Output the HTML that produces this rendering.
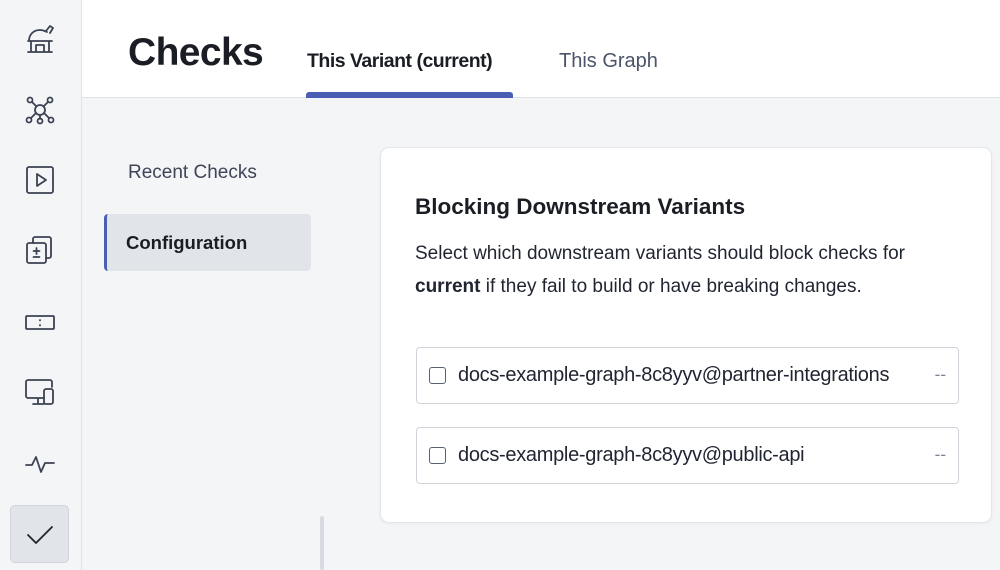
<!DOCTYPE html>
<html><head><meta charset="utf-8"><style>
*{box-sizing:border-box;margin:0;padding:0}
body{width:1000px;height:570px;overflow:hidden;background:#f4f5f7;font-family:"Liberation Sans",sans-serif;color:#1f2430;position:relative}
.side{position:absolute;left:0;top:0;width:82px;height:570px;background:#f4f5f7;border-right:1px solid #dfe2e7}
.ic{position:absolute;left:22px;width:36px;height:36px}
.ic svg{width:36px;height:36px;fill:none;stroke:#3b4252;stroke-width:1.8;stroke-linecap:round;stroke-linejoin:round}
.act{position:absolute;left:10px;top:505px;width:59px;height:58px;background:#e1e4e9;border:1px solid #cfd3da;border-radius:5px}
.hdr{position:absolute;left:82px;top:0;width:918px;height:98px;background:#fff;border-bottom:1px solid #dfe2e7}
h1{position:absolute;left:128px;top:31px;font-size:39px;font-weight:bold;color:#1a1d24;letter-spacing:-0.6px}
.t1{position:absolute;left:307px;top:50px;font-size:19.5px;font-weight:bold;color:#1a1d24;letter-spacing:-0.5px}
.ul{position:absolute;left:306px;top:92px;width:207px;height:6px;background:#4a5fb4;border-radius:3px 3px 0 0}
.t2{position:absolute;left:559px;top:50px;font-size:20px;color:#4b5468}
.rc{position:absolute;left:128px;top:162px;font-size:19px;color:#3e4557}
.cfg{position:absolute;left:104px;top:214px;width:207px;height:57px;background:#e1e4e9;border-left:3px solid #4a5fb4;border-radius:4px}
.cfg span{position:absolute;left:19px;top:18px;font-size:18.5px;font-weight:bold;color:#1a1d24}
.scroll{position:absolute;left:320px;top:516px;width:4px;height:54px;background:#d7dae0;border-radius:2px}
.card{position:absolute;left:380px;top:147px;width:612px;height:376px;background:#fff;border:1px solid #e3e6ea;border-radius:9px;box-shadow:0 1px 3px rgba(0,0,0,.05)}
h2{position:absolute;left:34px;top:46px;font-size:22.5px;font-weight:bold;color:#1a1d24}
.p{position:absolute;left:34px;top:89px;font-size:19px;line-height:33px;color:#1f2430;width:530px}
.row{position:absolute;left:35px;width:543px;height:57px;border:1px solid #d0d4da;border-radius:4px}
.cb{position:absolute;left:12px;top:19px;width:17px;height:17px;border:1.5px solid #5a6170;border-radius:3px}
.row .n{position:absolute;left:41px;top:16px;font-size:20px;color:#1f2430;letter-spacing:-0.3px}
.row .d{position:absolute;right:12px;top:17px;font-size:17px;color:#7b8291}
</style></head><body>
<div class="side">
 <div class="ic" style="top:22px"><svg viewBox="0 0 36 36"><path d="M6 30h24M9 30V19M27 30V19M7 19c0-7 5-11 11-11 3 0 5 1 7 2M14 30v-7h8v7M6 19h24M24 9l4-5 3 2-3 5"/></svg></div>
 <div class="ic" style="top:92px"><svg viewBox="0 0 36 36"><circle cx="18" cy="18" r="5"/><circle cx="8" cy="8" r="2.5"/><circle cx="28" cy="8" r="2.5"/><circle cx="7" cy="28" r="2.5"/><circle cx="29" cy="28" r="2.5"/><circle cx="18" cy="29" r="2.5"/><path d="M10 10l4 4M26 10l-4 4M9 26l5-5M27 26l-5-5M18 23v4"/></svg></div>
 <div class="ic" style="top:162px"><svg viewBox="0 0 36 36"><rect x="5" y="5" width="26" height="26" rx="2"/><path d="M15 12v12l9-6z"/></svg></div>
 <div class="ic" style="top:232px"><svg viewBox="0 0 36 36"><rect x="5" y="11" width="19" height="20" rx="2"/><path d="M11 11V7a2 2 0 0 1 2-2h14a2 2 0 0 1 2 2v17a2 2 0 0 1-2 2h-3M14.5 16v6M11.5 19h6M11.5 25h6"/></svg></div>
 <div class="ic" style="top:304px"><svg viewBox="0 0 36 36"><rect x="4" y="12" width="28" height="13" rx="1"/><path d="M18 16v.5M18 21v.5"/></svg></div>
 <div class="ic" style="top:374px"><svg viewBox="0 0 36 36"><path d="M22 24H6a2 2 0 0 1-2-2V8a2 2 0 0 1 2-2h22a2 2 0 0 1 2 2v5M11 30h11M16 24v6"/><rect x="22" y="15" width="9" height="15" rx="2"/></svg></div>
 <div class="ic" style="top:446px"><svg viewBox="0 0 36 36"><path d="M4 19h6l4-8 5 15 4-9h9"/></svg></div>
 <div class="act"></div>
 <div class="ic" style="top:517px"><svg viewBox="0 0 36 36" style="stroke:#1f2430"><path d="M6 18l8 8 16-16"/></svg></div>
</div>
<div class="hdr"></div>
<h1>Checks</h1>
<div class="t1">This Variant (current)</div>
<div class="ul"></div>
<div class="t2">This Graph</div>
<div class="rc">Recent Checks</div>
<div class="cfg"><span>Configuration</span></div>
<div class="scroll"></div>
<div class="card">
 <h2>Blocking Downstream Variants</h2>
 <div class="p">Select which downstream variants should block checks for<br><b>current</b> if they fail to build or have breaking changes.</div>
 <div class="row" style="top:199px"><div class="cb"></div><span class="n">docs-example-graph-8c8yyv@partner-integrations</span><span class="d">--</span></div>
 <div class="row" style="top:279px"><div class="cb"></div><span class="n">docs-example-graph-8c8yyv@public-api</span><span class="d">--</span></div>
</div>
</body></html>
